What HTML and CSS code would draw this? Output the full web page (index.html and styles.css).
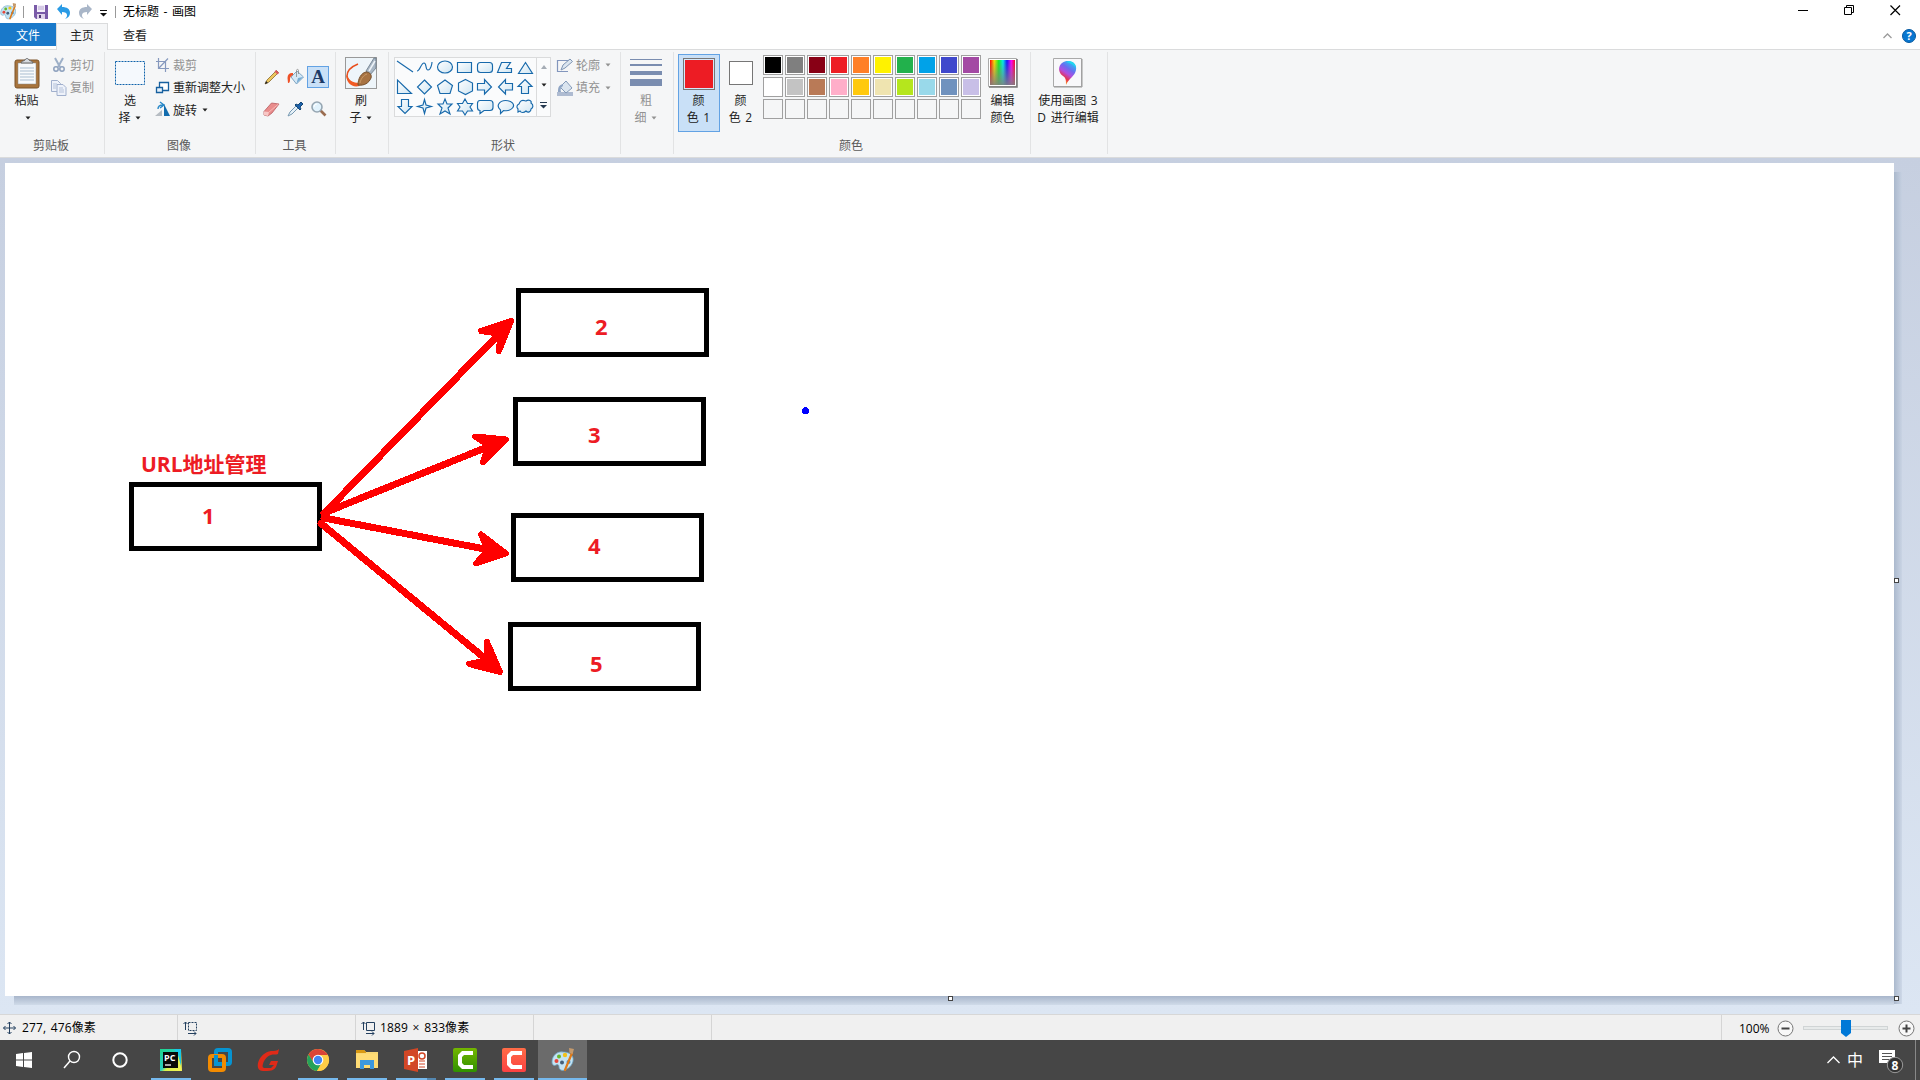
FILE: index.html
```html
<!DOCTYPE html>
<html lang="zh-CN">
<head>
<meta charset="utf-8">
<title>无标题 - 画图</title>
<link rel="stylesheet" href="styles.css">
</head>
<body>
<svg class="defs" width="0" height="0">
  <defs>
    <linearGradient id="glass" x1="0" y1="0" x2="1" y2="1"><stop offset="0" stop-color="#fff"/><stop offset="1" stop-color="#cfe5f2"/></linearGradient>
    <linearGradient id="rainbow"><stop offset="0" stop-color="#f00"/><stop offset=".17" stop-color="#fd0"/><stop offset=".35" stop-color="#1e2"/><stop offset=".52" stop-color="#0ee"/><stop offset=".68" stop-color="#11f"/><stop offset=".85" stop-color="#f0f"/><stop offset="1" stop-color="#f02"/></linearGradient>
    <linearGradient id="fade" x1="0" y1="0" x2="0" y2="1"><stop offset="0" stop-color="#808080" stop-opacity="0"/><stop offset="1" stop-color="#808080" stop-opacity=".9"/></linearGradient>
    <linearGradient id="drop" x1=".8" y1="0" x2=".3" y2="1"><stop offset="0" stop-color="#19d3f3"/><stop offset=".35" stop-color="#6a6cf0"/><stop offset=".55" stop-color="#b04ee0"/><stop offset=".75" stop-color="#e8304a"/><stop offset="1" stop-color="#ffc21a"/></linearGradient>
    <linearGradient id="pc" x1="0" y1="0" x2="1" y2="1"><stop offset="0" stop-color="#1fd68c"/><stop offset=".5" stop-color="#29cfc0"/><stop offset=".6" stop-color="#d8f04a"/><stop offset="1" stop-color="#f6f35a"/></linearGradient>
    <linearGradient id="camg" x1="0" y1="0" x2="0" y2="1"><stop offset="0" stop-color="#74b600"/><stop offset="1" stop-color="#2f9100"/></linearGradient>
    <linearGradient id="camr" x1="0" y1="0" x2="0" y2="1"><stop offset="0" stop-color="#ff6c47"/><stop offset="1" stop-color="#fb4141"/></linearGradient>
    <symbol id="palette" viewBox="0 0 24 24">
      <path d="M12 4C6 3 1 8 1 14c0 3 2 4 4 3 2-1 3 0 3 2 0 3 3 4 6 3 5-2 9-7 8-12-1-4-5-6-10-6z" fill="#c4e3f3" stroke="#6ba4c4" stroke-width=".8"/>
      <circle cx="5.500" cy="13" r="2" fill="#e4473b"/><circle cx="8" cy="8.500" r="2" fill="#65b62f"/><circle cx="14" cy="7" r="2.200" fill="#f3c11c"/><circle cx="11" cy="14.500" r="2" fill="#45607a"/><circle cx="17.500" cy="14" r="2" fill="#3d8fd0"/>
      <path d="M21 5L14 22" stroke="#e07a17" stroke-width="2.200" stroke-linecap="round"/><path d="M18 0l5 1-1.500 5-3-1z" fill="#c59a6c"/>
    </symbol>
    <symbol id="dropdown" viewBox="0 0 6 4"><path d="M.5.500h5L3 3.500z" fill="currentColor"/></symbol>
  </defs>
</svg>

<header class="titlebar">
  <svg class="app-icon" width="16" height="18"><use href="#palette" x="0" y="0" width="17" height="17"/></svg>
  <i class="bar bar-a"></i>
  <svg class="save" width="14" height="14"><path d="M0 0h14v14H2l-2-2z" fill="#7a5ba8"/><path d="M3 0h8v7H3z" fill="#f4effa"/><path d="M3 9h8v5H3z" fill="#ded3ea"/><path d="M5 10h2v3H5z" fill="#4e3b74"/><path d="M4 2h6M4 4h6" stroke="#b5a5d0"/></svg>
  <svg class="undo" width="14" height="15"><path d="M0 5l5-5v3c5 0 8 2 8 6 0 3-2 5-5 6 2-2 2-3 2-4 0-2-2-3-5-3v3z" fill="#2a9be5"/></svg>
  <svg class="redo" width="14" height="15"><path d="M14 5L9 0v3C4 3 1 5 1 9c0 3 2 5 5 6-2-2-2-3-2-4 0-2 2-3 5-3v3z" fill="#a9b6c8"/></svg>
  <svg class="customize" width="7" height="8"><path d="M0 1.500h7" stroke="#111"/><path d="M0 4h7L3.500 7.500z" fill="#111"/></svg>
  <i class="bar bar-b"></i>
  <span class="title">无标题 - 画图</span>
  <div class="window-buttons">
    <svg width="11" height="11"><path d="M0 5.500h10" stroke="#000"/></svg>
    <svg width="11" height="11"><path d="M.5 2.500h7v7h-7zM2.500 2.500v-2h7v7h-2" fill="none" stroke="#000"/></svg>
    <svg width="11" height="11"><path d="M.5.500l9.500 9.500M10 .500l-9.500 9.500" stroke="#000" stroke-width="1.200"/></svg>
  </div>
</header>
<nav class="tabs">
  <span class="tab file">文件</span><span class="tab home">主页</span><span class="tab view">查看</span>
  <div class="tab-tools">
    <svg width="9" height="6"><path d="M.5 5l4-4 4 4" fill="none" stroke="#9b9b9b" stroke-width="1.300"/></svg>
    <span class="help">?</span>
  </div>
</nav>

<section class="ribbon">
  <div class="group clipboard">
    <div class="content">
      <div class="big paste">
        <div class="big-icon"><svg width="26" height="31"><rect x="1" y="2" width="24" height="28" rx="2" fill="#a8743c" stroke="#7c552b"/><path d="M4 5h18v21H4z" fill="#f8fafc" stroke="#8b8b8b" stroke-width=".5"/><path d="M6 10h14M6 13h14M6 16h14M6 19h14M6 22h14" stroke="#a9bdd0"/><path d="M7 5c0-2 3-2 4-3 1-2 3-2 4 0 1 1 4 1 4 3z" fill="#d6dadf" stroke="#666"/></svg></div>
        <span>粘贴</span><svg class="dd" width="6" height="4"><use href="#dropdown"/></svg>
      </div>
      <div class="list disabled">
        <div><svg width="16" height="16"><path d="M4 1l5 9M12 1L7 10" stroke="#9eb0c8" stroke-width="2"/><circle cx="5" cy="12" r="2.200" fill="none" stroke="#8da0bd" stroke-width="1.500"/><circle cx="11" cy="12" r="2.200" fill="none" stroke="#8da0bd" stroke-width="1.500"/></svg><span>剪切</span></div>
        <div><svg width="16" height="16"><path d="M.5.500h6l3 3v8h-9z" fill="#eef2fa" stroke="#a1b0cd"/><path d="M6 4.500h6l3 3v8H6z" fill="#eef2fa" stroke="#a1b0cd"/><path d="M2 4h4M2 6h3M2 8h3M8 8h4M8 10h5M8 12h5" stroke="#b5c2da"/></svg><span>复制</span></div>
      </div>
    </div>
    <div class="label">剪贴板</div>
  </div>

  <div class="group image">
    <div class="content">
      <div class="big select">
        <div class="big-icon"><svg width="30" height="24"><rect x=".5" y=".5" width="29" height="23" fill="#f5f9fd" stroke="#0e62ab" stroke-dasharray="2 1"/></svg></div>
        <span>选</span><span class="with-dd">择<svg class="dd" width="6" height="4"><use href="#dropdown"/></svg></span>
      </div>
      <div class="list">
        <div class="disabled"><svg width="15" height="16"><path d="M3.500 1v10.500H14M1 4.500h9.500V15M13 1.500L4 11" fill="none" stroke="#8699be" stroke-width="1.200"/></svg><span>裁剪</span></div>
        <div><svg width="15" height="16"><path d="M4.500 2.500h9v8h-9z" fill="#fff" stroke="#17609f" stroke-width="1.300"/><path d="M1.500 7.500h6v5h-6z" fill="#e4f0fa" stroke="#17609f" stroke-width="1.300"/></svg><span>重新调整大小</span></div>
        <div><svg width="15" height="16"><path d="M0 14h7V8z" fill="#b6bcc2"/><path d="M9 2v12h6z" fill="#126cae"/><path d="M3 7c0-3 2-4 5-4M5 0l4 3-4 3" fill="none" stroke="#2888c8" stroke-width="1.400"/></svg><span>旋转</span><svg class="dd" width="6" height="4"><use href="#dropdown"/></svg></div>
      </div>
    </div>
    <div class="label">图像</div>
  </div>

  <div class="group tools">
    <div class="tool-grid">
      <div><svg width="16" height="16"><path d="M1 15l2-4L12.500 1.500l2 2L5 13z" fill="#edc75d" stroke="#8b692c" stroke-width=".8"/><path d="M12 1l3 3-1.500 1.500-3-3z" fill="#d9555c"/><path d="M1 15l1-3 2 2z" fill="#222"/></svg></div>
      <div><svg width="17" height="17"><path d="M4 8l6-6 6.500 6L9.500 15z" fill="#d5e8f6" stroke="#6693b5" stroke-width=".8"/><path d="M11 9l5-1-6.500 6.500z" fill="#77acd4"/><path d="M9.500 8V1.500c0-1.500 2-1.500 2 0V5" fill="none" stroke="#888" stroke-width=".8"/><path d="M6 4C3 3.500.500 5 .500 9l.5 5c2 0 2-2 2-4s1-3 3-4z" fill="#ef5127"/></svg></div>
      <div class="active">A</div>
      <div><svg width="17" height="16"><path d="M1 10.500L8.500 2l7.500 1-7 9-4 3-4-1z" fill="#e98c8c" stroke="#b75c60" stroke-width=".8"/><path d="M1 10.500l5 .5-1 4-4-1z" fill="#f8c7c5"/><path d="M6 11l9.500-8" stroke="#f8b9b6"/></svg></div>
      <div><svg width="16" height="16"><path d="M1 15l2-4 6-6 2 2-6 6z" fill="#e6f1f8" stroke="#7799b2"/><path d="M8 4l1-1 2 1 3-3 2 2-3 3 1 2-1 1z" fill="#1d62ab" stroke="#134675"/></svg></div>
      <div><svg width="16" height="16"><path d="M9.500 9.500l5 5" stroke="#9a6c4f" stroke-width="2.600"/><circle cx="6" cy="6" r="5" fill="#e2f3fd" stroke="#96a6b2" stroke-width="1.600"/><path d="M3 6a3 3 0 013-3" stroke="#fff" fill="none"/></svg></div>
    </div>
    <div class="label">工具</div>
  </div>

  <div class="group brushes">
    <div class="big">
      <div class="big-icon"><svg width="32" height="32"><rect x=".5" y=".5" width="31" height="31" fill="#eef5fa" stroke="#999"/><path d="M13 7C8 9 2 13 2 19c1 6 7 9 14 8" fill="none" stroke="#e9501f" stroke-width="1.600"/><path d="M1.500 18c2 5 6 8 13 8v3C7 31 1 26 1.500 18z" fill="#f05a24"/><path d="M21 14L29 1h2v10l-6 7z" fill="#a9b7c5" stroke="#687786" stroke-width=".8"/><path d="M24 14l6-10" stroke="#eef3f8" stroke-width="1.500"/><path d="M13 28c0-6 3-12 8-13 4 0 6 3 5 6-2 5-7 8-13 7z" fill="#a77343" stroke="#76502d"/><path d="M15 26c1-5 4-8 7-9" fill="none" stroke="#c99a67"/></svg></div>
      <span>刷</span><span class="with-dd">子<svg class="dd" width="6" height="4"><use href="#dropdown"/></svg></span>
    </div>
  </div>

  <div class="group shapes">
    <div class="content">
      <div class="gallery">
        <svg class="shape-grid" width="141" height="58" fill="url(#glass)" stroke="#1769ab" stroke-width="1.150">
          <path d="M2 3l16 11"/><path d="M22 13c3 0 4-8 7-8s1 7 4 7 4-7 4-8" fill="none"/><ellipse cx="50" cy="9" rx="7.500" ry="6"/><path d="M62.500 4.500h14v10h-14z"/><rect x="82.500" y="4.500" width="15" height="10" rx="3"/><path d="M102.500 14.500l4-10h9l-4 6h5v4z"/><path d="M130.500 4.500l7 11h-14z"/>
          <path d="M2.500 22v13.500h14z"/><path d="M29.500 22l7 7-7 7-7-7z"/><path d="M50 22l7.500 5.500-2.500 8H45l-2.500-8z"/><path d="M70.500 21.500l7 3.500v8l-7 3.500-7-3.500v-8z"/><path d="M82.500 25.500h7v-4l7 7.500-7 7v-4h-7z"/><path d="M117.500 25.500h-7v-4l-7 7.500 7 7v-4h7z"/><path d="M130 21.500l7 7h-3.500v7h-7v-7H123z"/>
          <path d="M6.500 41.500h7v7H17l-7 7-7-7h3.500z"/><path d="M29.500 41.500l1.500 5.500 5.500 1.500-5.500 1.500-1.500 5.500-1.500-5.500-5.500-1.500 5.500-1.500z"/><path d="M50 41l2 5h5l-4 4 2 6-5-3-5 3 2-6-4-4h5z"/><path d="M70 41l2.500 4.500h5L75 49l2.500 4h-5L70 57l-2.500-4h-5L65 49l-2.500-3.500h5z"/><path d="M85 42.500h10q3 0 3 3v4q0 3-3 3h-6l-4 3v-3q-2.500 0-2.500-3v-4q0-3 2.500-3z"/><path d="M105.500 52c-5-4-1-9.500 5-9.500s10 4 7 7.500c-2 2.500-6 3-9 2.500l-3 3z"/><path d="M125 44c2-3 5-1 6-1 3-2 6 0 5 2 3 2 2 5 0 6 0 3-3 4-5 2-2 2-5 2-6 0l-2 1v-3c-2-2-1-4 1-5z"/>
        </svg>
        <div class="scroller"><svg width="6" height="4"><path d="M0 4h6L3 0z" fill="#a5acb5"/></svg><svg class="dd" width="6" height="4"><use href="#dropdown"/></svg><svg width="7" height="7"><path d="M0 .500h7" stroke="#24384f"/><path d="M0 3h7L3.500 6.500z" fill="#24384f"/></svg></div>
      </div>
      <div class="list disabled">
        <div><svg width="16" height="16"><path d="M.5 3.500h13M.5 3v11.500H11" fill="none" stroke="#8296bd" stroke-width="1.200"/><path d="M4 13l2-5 7-6 2.500 2.500L8 11z" fill="#dce6f0" stroke="#7e95b4"/></svg><span>轮廓</span><svg class="dd" width="6" height="4"><use href="#dropdown"/></svg></div>
        <div><svg width="16" height="16"><path d="M0 12h16v4H0z" fill="#aebbd1"/><path d="M3 7l6-6 6 7-6 5z" fill="#dbe5ef" stroke="#839ab8"/><path d="M6 4C2 5 1 7 1 12h3c-1-3 0-5 2-6z" fill="#8fa5c4"/></svg><span>填充</span><svg class="dd" width="6" height="4"><use href="#dropdown"/></svg></div>
      </div>
    </div>
    <div class="label">形状</div>
  </div>

  <div class="group size">
    <div class="big disabled">
      <div class="big-icon"><svg width="32" height="29" fill="#7a8db0"><path d="M0 0h32v1H0zM0 5h32v2H0zM0 12h32v4H0zM0 20h32v7H0z"/></svg></div>
      <span>粗</span><span class="with-dd">细<svg class="dd" width="6" height="4"><use href="#dropdown"/></svg></span>
    </div>
  </div>

  <div class="group colors">
    <div class="content">
      <div class="big color1"><div class="big-icon"><i class="chip chip-red"></i></div><span>颜</span><span>色 1</span></div>
      <div class="big color2"><div class="big-icon"><i class="chip chip-white"></i></div><span>颜</span><span>色 2</span></div>
      <div class="swatches">
        <i class="black"></i><i class="gray"></i><i class="maroon"></i><i class="red"></i><i class="orange"></i><i class="yellow"></i><i class="green"></i><i class="sky"></i><i class="indigo"></i><i class="purple"></i>
        <i class="white"></i><i class="silver"></i><i class="brown"></i><i class="rose"></i><i class="gold"></i><i class="tan"></i><i class="lime"></i><i class="aqua"></i><i class="steel"></i><i class="lavender"></i>
        <i></i><i></i><i></i><i></i><i></i><i></i><i></i><i></i><i></i><i></i>
      </div>
      <div class="big edit-colors"><div class="big-icon"><svg width="30" height="30"><path d="M.5.500h28v28H.5z" fill="#fff" stroke="#aaa"/><path d="M29 1v28H1" fill="none" stroke="#777" stroke-width="1.500"/><path d="M2 2h25v25H2z" fill="url(#rainbow)"/><path d="M2 2h25v25H2z" fill="url(#fade)"/></svg></div><span>编辑</span><span>颜色</span></div>
    </div>
    <div class="label">颜色</div>
  </div>

  <div class="group paint3d">
    <div class="big"><div class="big-icon"><svg width="30" height="30"><path d="M.5.500h28v28H.5z" fill="#f8f8fa" stroke="#aaa"/><path d="M29 1v28H1" fill="none" stroke="#999"/><path d="M15 3c6 0 9 4 8 9-1 6-7 8-10 15 0-5 0-7-3-9C3 13 6 3 15 3z" fill="url(#drop)"/><path d="M13 4c4-2 9 0 10 6-2-3-5-5-10-6z" fill="#20d8ee"/></svg></div><span>使用画图 3</span><span>D 进行编辑</span></div>
  </div>
</section>

<main class="workspace">
  <div class="canvas">
    <div class="node n1"></div><div class="node n2"></div><div class="node n3"></div><div class="node n4"></div><div class="node n5"></div>
    <svg class="arrows" width="1889" height="833" viewBox="5 163 1889 833" shape-rendering="crispEdges">
      <g fill="none" stroke="#f00" stroke-width="7" stroke-linecap="round"><path d="M325 512.500L498 335"/><path d="M324 513L490 446"/><path d="M324 518L490 550"/><path d="M321 523.500L487 660"/></g>
      <g fill="#f00" stroke="#f00" stroke-width="6" stroke-linejoin="round"><path d="M511 321l-30 10 14 2 5 5-1 13z"/><path d="M506 439.500l-31-3 12 8 0 5-4 13z"/><path d="M506 553.500l-25-19 6 13-1 5-10 11z"/><path d="M500 672l-13-30 0 14-4 5-14 3z"/></g>
      <circle cx="805.500" cy="410.500" r="3.500" fill="#00f"/>
    </svg>
    <span class="mark url">URL地址管理</span><span class="mark m1">1</span><span class="mark m2">2</span><span class="mark m3">3</span><span class="mark m4">4</span><span class="mark m5">5</span>
    <i class="shadow-right"></i><i class="shadow-bottom"></i>
    <i class="handle right"></i><i class="handle bottom"></i><i class="handle corner"></i>
  </div>
</main>

<footer class="status">
  <div class="cell"><svg width="13" height="14"><path d="M6.500 1v12M.5 7h12M4.500 3l2-2 2 2M4.500 11l2 2 2-2M2.500 5l-2 2 2 2M10.500 5l2 2-2 2" fill="none" stroke="#24405f"/></svg><span>277, 476像素</span></div>
  <div class="cell"><svg width="14" height="14"><path d="M2.500 1v8M.5 3l2-2 2 2M5 12.500h8M11 10.500l2 2-2 2" fill="none" stroke="#24405f"/><rect x="5.500" y="1.500" width="8" height="8" fill="none" stroke="#24405f" stroke-dasharray="2 1"/></svg></div>
  <div class="cell"><svg width="14" height="14"><path d="M2.500 1v8M.5 3l2-2 2 2M5 12.500h8M11 10.500l2 2-2 2M5.500 1.500h8v8h-8z" fill="none" stroke="#24405f"/></svg><span>1889 × 833像素</span></div>
  <div class="cell"></div>
  <div class="zoom">
    <span>100%</span>
    <svg width="17" height="17"><circle cx="8.500" cy="8.500" r="7.500" fill="#f8f8f8" stroke="#777"/><path d="M4.500 8.500h8" stroke="#444" stroke-width="2"/></svg>
    <svg class="slider" width="85" height="17"><rect x=".5" y="6.500" width="84" height="3" fill="#e7eaea" stroke="#d0d4d5"/><path d="M38 0h10v13l-5 4-5-4z" fill="#0078d7"/></svg>
    <svg width="17" height="17"><circle cx="8.500" cy="8.500" r="7.500" fill="#f8f8f8" stroke="#777"/><path d="M4.500 8.500h8M8.500 4.500v8" stroke="#444" stroke-width="2"/></svg>
  </div>
</footer>

<div class="taskbar">
  <div class="sys"><svg width="16" height="18"><path d="M0 3l7-1v6.500H0zM8 2l8-1v7.500H8zM0 9.500h7V16l-7-1zM8 9.500h8V17l-8-1z" fill="#fff"/></svg></div>
  <div class="sys"><svg width="18" height="20"><circle cx="11" cy="7" r="5.500" fill="none" stroke="#fff" stroke-width="1.400"/><path d="M7 11l-6 7" stroke="#fff" stroke-width="1.500"/></svg></div>
  <div class="sys"><svg width="18" height="18"><circle cx="9" cy="9" r="6.700" fill="none" stroke="#fff" stroke-width="2"/></svg></div>
  <div class="app open first"><svg width="22" height="24"><path d="M0 1h21l1 22H0z" fill="url(#pc)"/><path d="M14 1h7v17l-3-11z" fill="#18c9e8"/><path d="M3 4h15v16H3z" fill="#080808"/><path d="M5 17h6" stroke="#fff" stroke-width="1.300"/><text x="4" y="12.500" class="pc-text">PC</text></svg></div>
  <div class="app"><svg width="24" height="26" fill="none" stroke-width="4"><rect x="8" y="3" width="14" height="14" rx="2" stroke="#0694d2"/><rect x="2" y="9" width="14" height="14" rx="2" stroke="#f38b00"/><path d="M8 8v9h6" stroke="#0694d2"/></svg></div>
  <div class="app"><svg width="22" height="24"><path d="M21 1l-1 5c-2 1-5 0-7 1-4 1-7 5-8 9-1 3 0 4 2 4h6l3-3h-5l2-4h7l-2 6c-2 3-5 4-9 4H5c-4 0-6-3-5-8C2 8 7 4 13 3c3 0 6 0 8-2z" fill="#df2a18"/></svg></div>
  <div class="app open"><svg width="24" height="26" viewBox="0 0 24 24"><circle cx="12" cy="12" r="11" fill="#ffcd46"/><path d="M12 12H23A11 11 0 002.500 6.500L7.500 15z" fill="#db4437"/><path d="M2.500 6.500A11 11 0 0011 23l5-8.500-4 2.500-4-2z" fill="#25a25a"/><path d="M12 7h9.800A11 11 0 0111 23l5.500-9z" fill="#ffcd46"/><circle cx="12" cy="12" r="5.300" fill="#fff"/><circle cx="12" cy="12" r="4.200" fill="#4285f4"/></svg></div>
  <div class="app open"><svg width="22" height="20"><path d="M0 0h8l2 2h12v16H0z" fill="#f8d775"/><path d="M0 0h8l2 2v1H0z" fill="#d99912"/><path d="M0 4h22v14H0z" fill="#ffdc75"/><path d="M4 10h14v9h-4v-4H8v4H4z" fill="#3d98de"/></svg></div>
  <div class="app open double"><svg width="24" height="24"><path d="M12 3h11v18H12z" fill="#fff"/><path d="M0 3l14-3v24L0 21z" fill="#d24726"/><path d="M15 13h6M15 16h6M15 19h6" stroke="#d24726"/><circle cx="18" cy="8" r="3" fill="none" stroke="#d24726" stroke-width="1.500"/><text x="3" y="17" class="p-text">P</text></svg></div>
  <div class="app open"><svg width="24" height="28"><rect y="2" width="24" height="24" rx="2" fill="url(#camg)"/><path d="M20 5H9L5 9v10l4 4h11v-4h-9l-2-2v-6l2-2h9z" fill="#fff"/></svg></div>
  <div class="app open"><svg width="24" height="28"><rect y="2" width="24" height="24" rx="2" fill="url(#camr)"/><path d="M20 5H9L5 9v10l4 4h11v-4h-9l-2-2v-6l2-2h9z" fill="#fff"/></svg></div>
  <div class="app open current"><svg width="24" height="26"><use href="#palette" width="24" height="26"/></svg></div>
  <div class="tray">
    <svg width="13" height="8"><path d="M.5 7l6-6 6 6" fill="none" stroke="#fff" stroke-width="1.300"/></svg>
    <span class="ime">中</span>
    <svg class="notice" width="26" height="26"><path d="M0 2h16v13h-3v4l-4-4H0z" fill="#fff"/><path d="M3 5.500h10M3 8.500h10M3 11.500h7" stroke="#555"/><circle cx="16" cy="17" r="7.700" fill="#333" stroke="#999"/><text x="12.500" y="21.500" class="badge">8</text></svg>
    <i class="show-desktop"></i>
  </div>
</div>
</body>
</html>
```
FILE: styles.css
```css
* { box-sizing: border-box; }
body { margin: 0; width: 1920px; height: 1080px; overflow: hidden; display: flex; flex-direction: column; background: #fff; color: #222; font: 12px/17px "Open Sans", "Noto Sans CJK SC", sans-serif; }
svg { display: block; flex: none; overflow: visible; }
i { display: block; font-style: normal; flex: none; }
span { white-space: nowrap; }
.defs { position: absolute; }

.titlebar { height: 23px; display: flex; align-items: center; color: #000; }
.app-icon { overflow: hidden; }
.bar { width: 1px; height: 12px; background: #999; }
.bar-a { margin-left: 7px; }
.save { margin-left: 10px; }
.undo { margin-left: 9px; }
.redo { margin-left: 7px; }
.customize { margin-left: 8px; margin-top: 2px; }
.bar-b { margin-left: 8px; }
.title { margin-left: 7px; word-spacing: 1.500px; }
.window-buttons { margin: -3px 19px 0 auto; display: flex; gap: 35px; }

.tabs { height: 27px; flex: none; display: flex; border-bottom: 1px solid #dadbdc; }
.tab { height: 23px; padding-top: 4px; text-align: center; }
.file { width: 56px; background: #1979ca; color: #fff; }
.home { width: 52px; height: 27px; background: #f5f6f7; border: 1px solid #dadbdc; border-bottom: 0; padding-top: 3px; }
.view { width: 54px; }
.tab-tools { margin-left: auto; padding: 0 4px 1px 0; display: flex; align-items: center; gap: 10px; }
.help { width: 14px; height: 14px; border-radius: 50%; background: #0876d0; border: 1px solid #075aa1; color: #fff; font-weight: bold; font-size: 11px; line-height: 12px; text-align: center; }

.ribbon { height: 108px; flex: none; display: flex; background: #f5f6f7; border-bottom: 1px solid #dadbdc; padding: 2px 0 3px; }
.group { display: flex; flex-direction: column; border-right: 1px solid #e2e3e4; }
.content { display: flex; align-items: flex-start; }
.label { margin-top: auto; height: 17px; padding-right: 2px; text-align: center; color: #5a5a5a; }
.big { display: flex; flex-direction: column; align-items: center; padding-top: 3px; }
.big-icon { height: 37px; padding-bottom: 1px; display: flex; align-items: center; }
.big > span { height: 17px; line-height: 17px; word-spacing: 1.500px; }
.dd { color: #222; }
.with-dd { display: flex; align-items: center; gap: 4px; padding-right: 1px; }
.disabled, .disabled .dd { color: #929292; }
.list { display: flex; flex-direction: column; padding-top: 1px; }
.list > div { height: 22.500px; display: flex; align-items: center; gap: 3px; }
.list .dd { margin-left: 2px; }
.clipboard { width: 105px; }
.paste { width: 51px; padding-left: 2px; }
.paste .dd { margin: 7px 0 0 2px; }
.image { width: 151px; }
.select { width: 50px; }
.image .list, .clipboard .list { padding-top: 2px; }
.tools { width: 80px; }
.tool-grid { display: grid; grid-template-columns: repeat(3, 23.500px); row-gap: 10px; padding: 14px 0 0 4px; }
.tool-grid > div { height: 22px; display: flex; align-items: center; justify-content: center; }
.tool-grid .active { width: 22px; background: #c9e0f7; border: 1px solid #62a2e4; color: #1d3b68; font: bold 19px "Liberation Serif", serif; }
.brushes { width: 53px; padding-right: 2px; }
.shapes { width: 232px; }
.gallery { width: 157px; height: 60px; margin: 5px 6px 0 5px; display: flex; background: #fafbfc; border: 1px solid #dadbdc; }
.scroller { width: 14px; border-left: 1px solid #dadbdc; display: flex; flex-direction: column; align-items: center; justify-content: space-around; }
.shapes .list { padding-top: 2px; }
.shapes .label { padding-right: 3px; }
.size { width: 53px; padding-right: 2px; }
.colors { width: 357px; }
.color1 { width: 42px; height: 78px; margin: 2px 0 0 4px; padding: 0; background: #c9e0f7; border: 1px solid #62a2e4; }
.color1 .big-icon { height: 37px; padding: 0; }
.color1 > span { padding-right: 1px; }
.color2 { width: 42px; padding-right: 1px; }
.color2 .big-icon { padding-left: 1px; }
.chip { border: 1px solid #767676; }
.chip-red { width: 32px; height: 32px; background: #ed1c24; box-shadow: inset 0 0 0 1px #d5e8f9; }
.chip-white { width: 24px; height: 24px; background: #fff; }
.swatches { display: grid; grid-template-columns: repeat(10, 20px); gap: 2px; margin: 3px 0 0 1px; }
.swatches i { width: 20px; height: 20px; border: 1px solid #a0a0a0; padding: 1px; background-clip: content-box; box-shadow: inset 0 0 0 1px #f5f6f7; }
.swatches i[class] { box-shadow: inset 0 0 0 1px #fff; }
.black { background-color: #000; } .gray { background-color: #7f7f7f; } .maroon { background-color: #880015; } .red { background-color: #ed1c24; } .orange { background-color: #ff7f27; } .yellow { background-color: #fff200; } .green { background-color: #22b14c; } .sky { background-color: #00a2e8; } .indigo { background-color: #3f48cc; } .purple { background-color: #a349a4; }
.white { background-color: #fff; } .silver { background-color: #c3c3c3; } .brown { background-color: #b97a57; } .rose { background-color: #ffaec9; } .gold { background-color: #ffc90e; } .tan { background-color: #efe4b0; } .lime { background-color: #b5e61d; } .aqua { background-color: #99d9ea; } .steel { background-color: #7092be; } .lavender { background-color: #c8bfe7; }
.edit-colors { width: 43px; }
.paint3d { width: 77px; padding-right: 2px; }

.workspace { height: 856px; flex: none; padding: 5px; background: linear-gradient(#c6cfe0, #dce6f3); }
.canvas { position: relative; width: 1889px; height: 833px; background: #fff; }
.arrows { position: absolute; inset: 0; }
.node { position: absolute; width: 193px; height: 69px; border: 5px solid #000; }
.n1 { left: 124px; top: 319px; } .n2 { left: 511px; top: 125px; } .n3 { left: 508px; top: 234px; } .n4 { left: 506px; top: 350px; } .n5 { left: 503px; top: 459px; }
.mark { position: absolute; color: #ed1c24; font: bold 22px/30px "Open Sans", "Noto Sans CJK SC", sans-serif; }
.url { left: 136px; top: 286px; font-size: 21px; }
.m1 { left: 197px; top: 337px; } .m2 { left: 590px; top: 148px; } .m3 { left: 583px; top: 256px; } .m4 { left: 583px; top: 367px; } .m5 { left: 585px; top: 485px; }
.shadow-right { position: absolute; left: 1889px; top: 9px; width: 8px; height: 832px; background: linear-gradient(90deg, #abb9cd, #c5d0e199); }
.shadow-bottom { position: absolute; left: 9px; top: 833px; width: 1880px; height: 9px; background: linear-gradient(#a8b6cb, #d0dbe9); }
.handle { position: absolute; width: 5px; height: 5px; border: 1px solid #444; background: #fff; }
.right { left: 1889px; top: 415px; } .bottom { left: 943px; top: 833px; } .corner { left: 1889px; top: 833px; }

.status { height: 26px; flex: none; display: flex; background: #f0f0f0; border-top: 1px solid #d7d7d7; color: #000; }
.cell { width: 178px; display: flex; align-items: center; gap: 5px; padding-left: 5px; border-right: 1px solid #d5d5d5; word-spacing: 1.500px; letter-spacing: .1px; }
.cell:first-child { padding-left: 3px; gap: 6px; }
.zoom { margin-left: auto; width: 199px; display: flex; align-items: center; padding: 1px 4px 0 17px; border-left: 1px solid #d5d5d5; }
.zoom span { width: 38px; }
.slider { margin: 0 10px 0 9px; }

.taskbar { height: 40px; flex: none; display: flex; background: #464646; }
.sys, .app { display: flex; align-items: center; justify-content: center; }
.sys { width: 48px; }
.app { width: 49px; position: relative; }
.first { margin-left: 2px; }
.open::after { content: ""; position: absolute; left: 5px; bottom: 0; width: 40px; height: 2px; background: #76b9ed; }
.double::after { background: linear-gradient(90deg, #76b9ed 31px, #5487b0 31px); }
.current { background: #6b6b6b; }
.current::after { left: 0; width: 49px; }
.tray { margin-left: auto; display: flex; align-items: center; color: #fff; }
.ime { font: 16px/24px "Noto Sans CJK SC", sans-serif; margin: -2px 16px 0 7px; }
.notice { margin-top: 2px; }
.show-desktop { width: 5px; height: 40px; margin-left: 10px; border-left: 1px solid #888; }
.pc-text { font: bold 9px "Open Sans", sans-serif; fill: #fff; }
.p-text { font: bold 13px "Open Sans", sans-serif; fill: #fff; }
.badge { font: bold 12px "Open Sans", sans-serif; fill: #fff; }
```
